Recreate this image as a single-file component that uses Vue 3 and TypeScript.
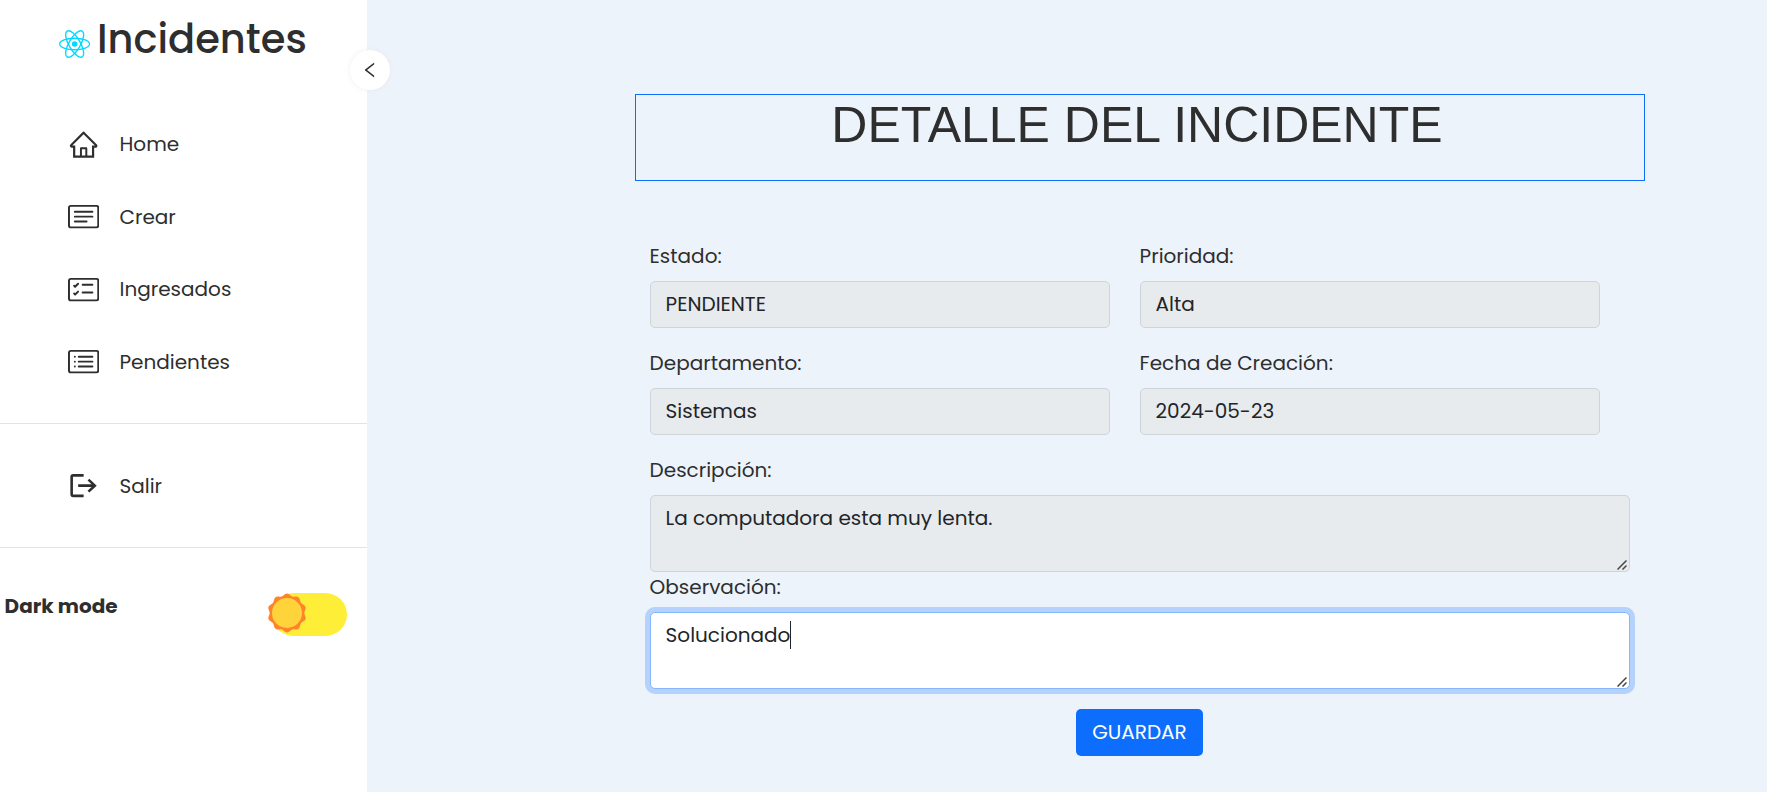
<script setup lang="ts">
import { ref } from 'vue'

interface NavItem {
  key: string
  label: string
}

const navItems: NavItem[] = [
  { key: 'home', label: 'Home' },
  { key: 'crear', label: 'Crear' },
  { key: 'ingresados', label: 'Ingresados' },
  { key: 'pendientes', label: 'Pendientes' },
]

const descripcion = ref('La computadora esta muy lenta.')
const observacion = ref('Solucionado')

// Scalloped outline of the sun on the theme switch
const sunPath: string =
  Array.from({ length: 120 }, (_, i) => {
    const a = (i / 120) * Math.PI * 2
    const r = 18.4 + 1.1 * Math.cos(10 * a)
    const x = (20 + r * Math.sin(a)).toFixed(2)
    const y = (20 - r * Math.cos(a)).toFixed(2)
    return `${i ? 'L' : 'M'}${x} ${y}`
  }).join('') + 'Z'
</script>

<template>
  <div class="layout">
    <aside class="sidebar">
      <button class="collapse" type="button" aria-label="Contraer">
        <svg viewBox="0 0 1024 1024"><path d="M724 218.3V141c0-6.7-7.7-10.4-12.9-6.3L260.3 486.8a31.86 31.86 0 0 0 0 50.3l450.8 352.1c5.3 4.1 12.9.4 12.9-6.3v-77.3c0-4.9-2.3-9.6-6.1-12.6l-360-281 360-281.1c3.8-3 6.1-7.7 6.1-12.6z" /></svg>
      </button>

      <div class="brand">
        <svg class="brand-logo" viewBox="-11.5 -10.23174 23 20.46348">
          <circle r="2.05" fill="#00d8ff" />
          <g stroke="#00d8ff" fill="none">
            <ellipse rx="11" ry="4.2" />
            <ellipse rx="11" ry="4.2" transform="rotate(60)" />
            <ellipse rx="11" ry="4.2" transform="rotate(120)" />
          </g>
        </svg>
        <h2>Incidentes</h2>
      </div>

      <nav class="menu">
        <a v-for="item in navItems" :key="item.key" class="link">
          <svg v-if="item.key === 'home'" viewBox="0 0 1024 1024">
            <path d="M946.5 505L560.1 118.8l-25.9-25.9a31.5 31.5 0 0 0-44.4 0L77.5 505a63.9 63.9 0 0 0-18.8 46c.4 35.2 29.7 63.3 64.9 63.3h42.5V940h691.8V614.3h43.4c17.1 0 33.2-6.7 45.3-18.8a63.6 63.6 0 0 0 18.7-45.3c0-17-6.7-33.1-18.8-45.2zM568 868H456V664h112v204zm217.9-325.7V868H632V640c0-22.1-17.9-40-40-40H432c-22.1 0-40 17.9-40 40v228H238.1V542.3h-96l370-369.7 23.1 23.1L882 542.3h-96.1z" />
          </svg>
          <svg v-else viewBox="0 0 16 16">
            <path d="M14.5 3a.5.5 0 0 1 .5.5v9a.5.5 0 0 1-.5.5h-13a.5.5 0 0 1-.5-.5v-9a.5.5 0 0 1 .5-.5zm-13-1A1.5 1.5 0 0 0 0 3.5v9A1.5 1.5 0 0 0 1.5 14h13a1.5 1.5 0 0 0 1.5-1.5v-9A1.5 1.5 0 0 0 14.5 2z" />
            <path v-if="item.key === 'crear'" d="M3 5.5a.5.5 0 0 1 .5-.5h9a.5.5 0 0 1 0 1h-9a.5.5 0 0 1-.5-.5M3 8a.5.5 0 0 1 .5-.5h9a.5.5 0 0 1 0 1h-9A.5.5 0 0 1 3 8m0 2.5a.5.5 0 0 1 .5-.5h6a.5.5 0 0 1 0 1h-6a.5.5 0 0 1-.5-.5" />
            <path v-else-if="item.key === 'ingresados'" d="M7 5.5a.5.5 0 0 1 .5-.5h5a.5.5 0 0 1 0 1h-5a.5.5 0 0 1-.5-.5m-1.496-.854a.5.5 0 0 1 0 .708l-1.5 1.5a.5.5 0 0 1-.708 0l-.5-.5a.5.5 0 1 1 .708-.708l.146.147 1.146-1.147a.5.5 0 0 1 .708 0M7 9.5a.5.5 0 0 1 .5-.5h5a.5.5 0 0 1 0 1h-5a.5.5 0 0 1-.5-.5m-1.496-.854a.5.5 0 0 1 0 .708l-1.5 1.5a.5.5 0 0 1-.708 0l-.5-.5a.5.5 0 0 1 .708-.708l.146.147 1.146-1.147a.5.5 0 0 1 .708 0" />
            <path v-else d="M5 8a.5.5 0 0 1 .5-.5h7a.5.5 0 0 1 0 1h-7A.5.5 0 0 1 5 8m0-2.5a.5.5 0 0 1 .5-.5h7a.5.5 0 0 1 0 1h-7a.5.5 0 0 1-.5-.5m0 5a.5.5 0 0 1 .5-.5h7a.5.5 0 0 1 0 1h-7a.5.5 0 0 1-.5-.5m-1-5a.5.5 0 1 1-1 0 .5.5 0 0 1 1 0M4 8a.5.5 0 1 1-1 0 .5.5 0 0 1 1 0m0 2.5a.5.5 0 1 1-1 0 .5.5 0 0 1 1 0" />
          </svg>
          <span>{{ item.label }}</span>
        </a>
      </nav>

      <div class="session">
        <a class="link">
          <svg viewBox="0 0 24 24" class="stroked">
            <path d="M12 4.1H4Q2.8 4.1 2.8 5.3v13.4q0 1.2 1.2 1.2h8" />
            <path d="M7.8 12H20.600M15.700 7.400l4.900 4.600-4.900 4.600" />
          </svg>
          <span>Salir</span>
        </a>
      </div>

      <div class="theme">
        <span class="theme-label">Dark mode</span>
        <div class="switch">
          <svg class="sun" viewBox="0 0 40 40">
            <path :d="sunPath" fill="#ff832b" />
            <circle cx="20" cy="20" r="15" fill="#ffd43b" />
          </svg>
        </div>
      </div>
    </aside>

    <main class="content">
      <h1 class="title">DETALLE DEL INCIDENTE</h1>

      <form class="form" @submit.prevent>
        <div class="grid">
          <div class="field">
            <label>Estado:</label>
            <input class="control" disabled value="PENDIENTE" />
          </div>
          <div class="field">
            <label>Prioridad:</label>
            <input class="control" disabled value="Alta" />
          </div>
          <div class="field">
            <label>Departamento:</label>
            <input class="control" disabled value="Sistemas" />
          </div>
          <div class="field">
            <label>Fecha de Creación:</label>
            <input class="control" disabled value="2024-05-23" />
          </div>
        </div>
        <div class="field">
          <label>Descripción:</label>
          <div class="editor">
            <textarea v-model="descripcion" class="control area" rows="2" disabled></textarea>
            <svg class="grip" viewBox="0 0 10 10"><path d="M.5 9.5l9-9M5.5 9.5l4-4" /></svg>
          </div>
        </div>
        <div class="field">
          <label>Observación:</label>
          <div class="editor">
            <textarea v-model="observacion" class="control area active" rows="2"></textarea>
            <span class="caret"></span>
            <svg class="grip" viewBox="0 0 10 10"><path d="M.5 9.5l9-9M5.5 9.5l4-4" /></svg>
          </div>
        </div>
        <button class="save" type="submit">GUARDAR</button>
      </form>
    </main>
  </div>
</template>

<style>
body {
  background: #ecf3fb;
}
</style>

<style scoped>
* {
  box-sizing: border-box;
}
.layout {
  display: flex;
  height: 792px;
  overflow: hidden;
  background: #ecf3fb;
  color: #2e2e2e;
  font: 400 20px/30px Poppins, Inter, "Open Sans", sans-serif;
}
.sidebar {
  position: relative;
  flex: 0 0 367px;
  background: #fff;
}
.collapse {
  position: absolute;
  top: 50px;
  right: -23px;
  display: flex;
  align-items: center;
  justify-content: center;
  width: 40px;
  height: 40px;
  padding: 0;
  border: 0;
  border-radius: 50%;
  background: #fff;
  box-shadow: 0 0 5px rgba(0, 0, 0, 0.06), 0 0 9px rgba(255, 245, 250, 0.6);
}
.collapse svg {
  width: 20px;
  height: 20px;
  fill: #2e2e2e;
}
.brand {
  display: flex;
  align-items: flex-start;
  height: 108px;
  padding: 15px 0 0 59px;
}
.brand-logo {
  width: 31.3px;
  height: 28px;
  margin-top: 15px;
}
.brand h2 {
  margin: 0 0 0 6.7px;
  font-size: 40px;
  font-weight: 500;
  line-height: 48px;
}
.menu {
  display: flex;
  flex-direction: column;
  height: 316px;
  border-bottom: 1px solid #e3e3e3;
}
.link {
  display: flex;
  align-items: center;
  height: 72.5px;
  padding-left: 68px;
  gap: 20.25px;
}
.link svg {
  width: 31.25px;
  height: 31.25px;
  fill: #2e2e2e;
}
.link .stroked {
  fill: none;
  stroke: #2e2e2e;
  stroke-width: 2;
}
.session {
  display: flex;
  align-items: center;
  height: 124px;
  border-bottom: 1px solid #e3e3e3;
}
.theme {
  display: flex;
  align-items: flex-start;
  justify-content: space-between;
  padding: 42.5px 20px 0 4.6px;
}
.theme-label {
  font-weight: 700;
}
.switch {
  position: relative;
  width: 75px;
  height: 43px;
  margin-top: 2.5px;
  border-radius: 22px;
  background: #ffee38;
}
.sun {
  position: absolute;
  top: 0;
  left: -5px;
  width: 40px;
  height: 40px;
}
.content {
  flex: 1;
  padding: 94px 122px 0 268px;
}
.title {
  height: 87px;
  margin: 0 0 60px;
  padding-right: 6px;
  border: 1px solid #0d6efd;
  font: 400 50px/60px "Liberation Sans", Arial, sans-serif;
  text-align: center;
}
.form {
  display: flex;
  flex-direction: column;
  padding: 0 15px;
}
.grid {
  display: grid;
  grid-template-columns: 460px 460px;
  column-gap: 30px;
}
.grid .field {
  margin-bottom: 20px;
}
.field {
  display: flex;
  flex-direction: column;
}
.field label {
  margin-bottom: 10px;
  margin-left: -0.4px;
}
.control {
  display: block;
  width: 100%;
  height: 47px;
  margin: 0;
  padding: 6.5px 14.6px 8.5px;
  border: 1px solid #ced4da;
  border-radius: 5px;
  outline: 0;
  background: #e8ebed;
  color: #212529;
  font: inherit;
}
.area {
  height: 77px;
  overflow: hidden;
  resize: none;
}
.active {
  border-color: #86b7fe;
  background: #fff;
  box-shadow: 0 0 0 5px rgba(13, 110, 253, 0.25);
}
.editor {
  position: relative;
}
.grip {
  position: absolute;
  right: 3px;
  bottom: 2px;
  width: 10px;
  height: 10px;
  fill: none;
  stroke: #454545;
  stroke-width: 1.5;
}
.caret {
  position: absolute;
  top: 9px;
  left: 140px;
  width: 1px;
  height: 28px;
  background: #212529;
}
.save {
  align-self: center;
  width: 127px;
  height: 47px;
  margin-top: 20px;
  margin-right: 1px;
  padding: 0 0 1px;
  border: 0;
  border-radius: 5px;
  background: #0d6efd;
  color: #fff;
  font: inherit;
}
</style>
